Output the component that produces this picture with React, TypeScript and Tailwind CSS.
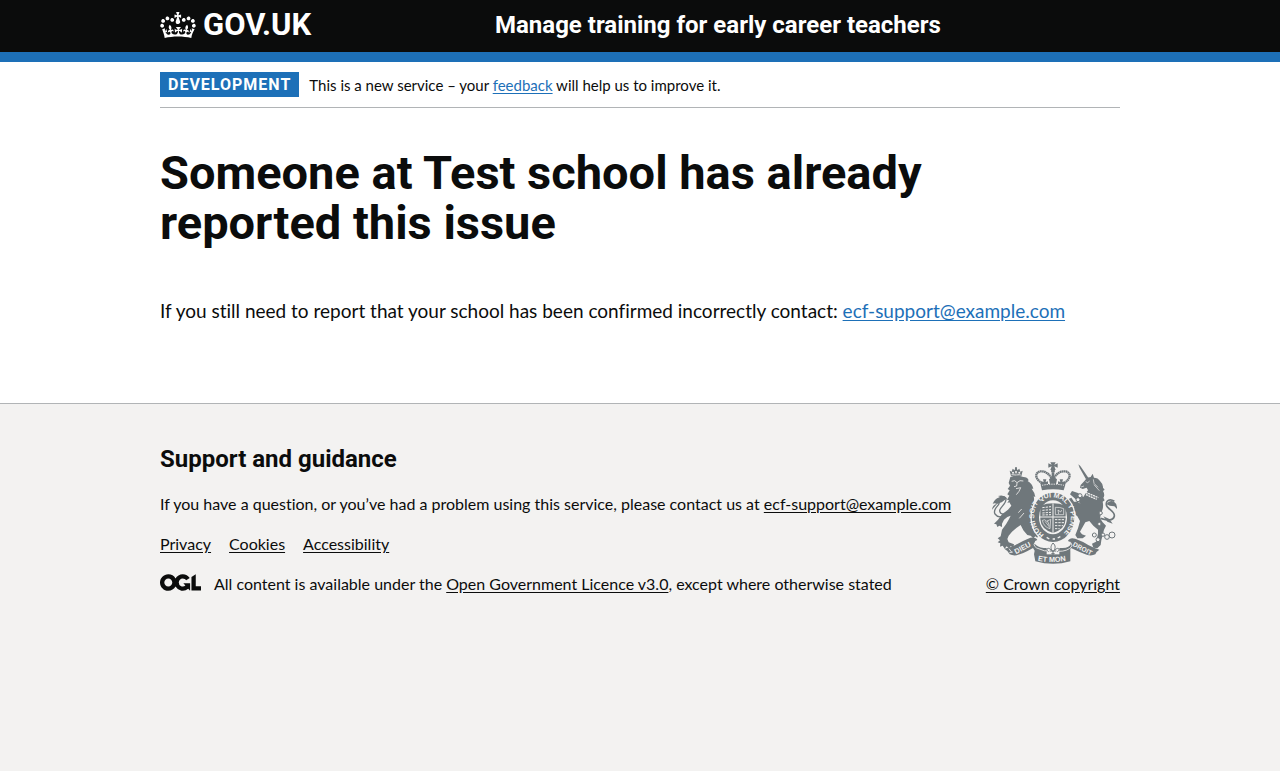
import type { ReactNode } from "react";

function Container({ children }: { children: ReactNode }) {
  return <div className="mx-auto w-full max-w-[992px] px-4">{children}</div>;
}

function CrownIcon() {
  return (
    <svg viewBox="0 4 36 27" className="h-[27px] w-9 shrink-0 fill-current" aria-hidden="true">
      <path d="M6.7 12.2c1 .4 2.1-.1 2.5-1s-.1-2.1-1-2.5c-1-.4-2.1.1-2.5 1-.4 1 0 2.1 1 2.5m-4.300 2.500c1 .4 2.100-.1 2.500-1s-.1-2.100-1-2.500c-1-.4-2.100.1-2.500 1-.5 1 0 2.100 1 2.500m-1 4.800c1 .4 2.100-.1 2.500-1 .4-1-.1-2.100-1-2.500-1-.4-2.100.1-2.500 1-.4 1 0 2.100 1 2.500m10.100-5.800c1 .4 2.100-.1 2.500-1s-.1-2.100-1-2.500c-1-.4-2.100.1-2.500 1s0 2.100 1 2.500m17.800-1.500c-1 .4-2.100-.1-2.500-1s.1-2.100 1-2.500c1-.4 2.100.1 2.500 1 .4 1 0 2.100-1 2.500m4.300 2.500c-1 .4-2.100-.1-2.500-1s.1-2.100 1-2.500c1-.4 2.100.1 2.500 1 .5 1 0 2.100-1 2.500m1 4.800c-1 .4-2.100-.1-2.500-1-.4-1 .1-2.100 1-2.500 1-.4 2.100.1 2.500 1 .4 1 0 2.100-1 2.500m-10.100-5.800c-1 .4-2.100-.1-2.500-1s.1-2.100 1-2.500c1-.4 2.100.1 2.500 1s0 2.100-1 2.500" />
      <path d="m18.700 8.800 2.400 1.300V6.500l-2.400.8-.2-.3 1-3h-3.400l1 3-.2.300-2.400-.8v3.600l2.400-1.300.3.300-1.400 4.200c-.1.200-.1.400-.1.600 0 1.100.8 2 1.900 2.200h.7c1-.2 1.900-1.100 1.900-2.100 0-.2 0-.4-.1-.6l-1.400-4.200z" />
      <path d="M18 28.500c4.800 0 9.200.5 13.300 1.500.5-3.800 1.700-6.300 3.300-8.800l-2.900-.9c.2 1.300.3 1.900 0 2.700-.4-.4-.8-1.100-1.100-2.300l-1.200 4c.7-.5 1.300-.8 2-.9-1.100 2.500-2.600 3.100-3.500 3-1.100-.2-1.700-1.200-1.500-2.100.3-1.200 1.500-1.500 2.100-.1 1.100-2.300-.8-3-2-2.300 1.900-1.900 2.100-3.500.6-5.600-2.100 1.600-2.100 3.200-1.200 5.500-1.200-1.400-3.200-.6-2.500 1.600.9-1.400 2.100-.5 1.900.8-.2 1.100-1.700 2.100-3.500 1.900-2.700-.2-2.900-2.100-2.900-3.600.7-.1 1.900.5 2.900 1.900l.4-4.300c-1.100 1.100-2.100 1.400-3.200 1.400.4-1.200 2.100-3 2.100-3h-5.400s1.700 1.900 2.100 3c-1.100 0-2.100-.2-3.200-1.400l.4 4.300c1-1.400 2.200-2 2.900-1.900-.1 1.500-.2 3.400-2.900 3.600-1.900.2-3.400-.8-3.500-1.900-.2-1.300 1-2.200 1.900-.8.700-2.300-1.200-3-2.500-1.600.9-2.200.9-3.900-1.200-5.500-1.500 2-1.300 3.700.6 5.600-1.200-.7-3.100 0-2 2.300.6-1.400 1.800-1.100 2.100.1.200.9-.3 1.900-1.500 2.100-.9.200-2.400-.5-3.500-3 .6 0 1.200.3 2 .9l-1.200-4c-.3 1.100-.7 1.900-1.100 2.300-.3-.8-.2-1.400 0-2.700l-2.900.9C3 23.700 4.200 26.200 4.700 30c4.100-1 8.500-1.500 13.300-1.500" />
    </svg>
  );
}

function OglIcon() {
  return (
    <svg viewBox="0 0 483.2 195.7" className="h-[17px] w-[41px] shrink-0 fill-current" role="img" aria-label="Open Government Licence">
      <path d="M421.5 142.8V.1l-50.7 32.3v161.1h112.4v-50.7zm-122.3-9.6A47.12 47.12 0 0 1 221 97.8c0-26 21.1-47.1 47.1-47.1 16.7 0 31.4 8.7 39.7 21.8l42.7-27.2A97.63 97.63 0 0 0 268.1 0c-36.5 0-68.3 20.1-85.1 49.7A98 98 0 0 0 97.8 0C43.9 0 0 43.9 0 97.8s43.9 97.8 97.8 97.8c36.5 0 68.3-20.1 85.1-49.7a97.76 97.76 0 0 0 149.6 25.4l19.4 22.2h3v-87.8h-80l24.3 27.5zM97.8 145c-26 0-47.1-21.1-47.1-47.1s21.1-47.1 47.1-47.1 47.1 21.1 47.1 47.1S123.8 145 97.8 145" />
    </svg>
  );
}

const ink = "#6f777b";
const paper = "#f3f2f1";

function Lion() {
  return (
    <g>
      <path fill={ink} d="M81 63 77 47l6 3 3-9 6 5 2-10h4l2 10 6-5 3 9 7-3-4 17q-15-4-31-1z" />
      <g fill={paper}>
        <circle cx="87" cy="53" r="3" />
        <circle cx="96" cy="51" r="3" />
        <circle cx="106" cy="53" r="3" />
      </g>
      <path d="M82 59q15-4 29 1" stroke={paper} strokeWidth="2" fill="none" />
      <path fill={ink} d="M79 66Q98 58 118 66Q130 66 134 76L131 78Q145 86 148 101L143 101Q152 112 154 126L149 124Q152 134 148 146L143 168Q150 180 148 192Q156 188 162 196L158 204L148 204L144 216L150 228L164 236L160 248L154 244L148 250L140 242L130 240L118 226L110 210L98 218L84 230L74 242L70 252L74 262L90 268L88 278L80 273L76 281L68 274L62 281L56 272L48 275L49 265L41 262L48 256L41 250L50 244L54 224L66 208L74 194L80 182L70 186L60 194L54 206L54 216L46 212L40 216L37 208L30 206L42 194L54 178L72 164L82 152L76 142L70 144L75 136L69 134L76 122L70 118L77 106L71 102L78 92L74 84Z" />
      <path d="m83 79 9-2 7 6 9-6 10 1M99 84l-1 9-8 2m6 6 14-3-5 11-8 10m6 54 10-11m-7 28 14-16" stroke={paper} strokeWidth="2.500" fill="none" />
      <path d="M73 179C57 184 44 192 33 177 27 166 36 158 42 151 47 145 47 138 39 139M78 171C62 180 49 180 47 168 46 157 67 148 66 132 64 122 50 124 40 134" stroke={ink} strokeWidth="4" fill="none" />
      <path fill={ink} d="M24 164q1-14 14-18-6-3-12 0 8-18 24-19l-8-4q18-5 27 7l-16 12-14 5z" />
    </g>
  );
}

function Unicorn() {
  return (
    <g>
      <path d="m283 28 6 5 24 35-7 5-19-34z" fill={ink} />
      <path fill={ink} d="M302 77L309 68L320 66L326 56L330 68Q342 68 348 78Q358 88 357 98L362 104L357 108Q364 120 358 128L362 136L356 140Q360 158 352 172L348 190L356 202L366 212L360 224L356 240L352 256L350 270L340 280L328 278L324 266L336 260L342 236L342 224L328 212L316 198L304 202L296 216L288 230L294 238L306 242L296 250L280 250L274 240L282 220L288 198L280 184L266 172L256 156L250 142L254 132L262 128L270 140L280 140L290 146L270 128L258 118L264 108L282 114L298 126L304 116L312 106L308 98L296 102L288 98L290 90Z" />
      <path d="m305 80 6 3 6-5m-26 18 9-3m28-20 2 12 12 12m-12-8 16 18" stroke={paper} strokeWidth="2" fill="none" />
      <path d="m305 112 38 16m-37-9 32 14" stroke={paper} strokeWidth="4" strokeDasharray="6 2" fill="none" />
      <g fill={paper} stroke={ink} strokeWidth="3">
        <circle cx="288" cy="122" r="6" />
        <circle cx="282" cy="134" r="6" />
        <circle cx="350" cy="174" r="5" />
        <circle cx="346" cy="207" r="5" />
        <circle cx="331" cy="240" r="6" />
        <circle cx="342" cy="254" r="6" />
        <circle cx="357" cy="239" r="5" />
        <circle cx="369" cy="246" r="7" />
        <circle cx="384" cy="240" r="9" />
      </g>
      <path d="M349 190c18 5 39 10 42-7 2-15-23-21-24-34-1-14 11-18 24-10" stroke={ink} strokeWidth="5" fill="none" />
      <path fill={ink} d="M368 148q8-14 22-8 10 6 9 22l-8-8-14-2zM358 184l18 8 10 14-16-6z" />
    </g>
  );
}

function ShieldAndCrown() {
  return (
    <g>
      <path fill={ink} d="M199 22h16l-4 7 10-4v13l-10-4 4 11h-16l4-11-10 4V25l10 4z" />
      <circle cx="207" cy="48" r="6" fill={ink} />
      <path d="M174 85C148 67 155 50 171 49c14-1 28 10 35 28 7-18 21-29 36-28 17 1 23 19-2 36" stroke={ink} strokeWidth="7" strokeDasharray="5 1" fill="none" />
      <path fill={ink} d="m170 89 2-10 7 2-2-8h10l-2 8 7-2v8l6 0-3-14 8-6v-13h8v13l8 6-3 14h6v-8l7 2-2-8h10l-2 8 7-2 2 10-5 17q-31-7-65 0z" />
      <path d="M174 91q33-7 66 0" stroke={paper} strokeWidth="3" strokeDasharray="4 3" fill="none" />
      <ellipse cx="207" cy="187" rx="68" ry="77" fill={paper} />
      <ellipse cx="207" cy="187" rx="64" ry="74" fill={ink} />
      <ellipse cx="207" cy="187" rx="42" ry="51" fill={paper} />
      <path id="garter" d="M182 240C137 212 142 140 186 130C207 123 234 129 249 151C271 180 262 222 226 244" fill="none" />
      <text fill={paper} fontSize="21" fontWeight="700" fontFamily="Liberation Sans, sans-serif">
        <textPath href="#garter" startOffset="2">HONI SOIT QUI MAL Y PENSE</textPath>
      </text>
      <path fill={ink} d="M169 152q38-14 76 0v40q-1 30-38 42-37-12-38-42z" />
      <path d="M207 145v91M168 186h78" stroke={paper} strokeWidth="3" />
      <path d="m175 158 26-3m-26 11 26-2m-26 10 26-2m-26 8 26-1m12 15h29m-29 9h28m-28 9h24m-24 9h14" stroke={paper} strokeWidth="3" strokeDasharray="7 3" />
      <path d="M214 157q14-1 25 4v18h-25zM224 177l-2-12 8 6 3-6M175 196q8-5 13 3l12-6-2 28q-19-5-23-25m8 3 14 18m-7-20 6 15" stroke={paper} strokeWidth="2" fill="none" />
      <path d="m188 247 8 5m10 0h7m8-3 8-4" stroke={paper} strokeWidth="4" />
    </g>
  );
}

function Motto() {
  return (
    <g>
      <path fill={ink} d="M61 281q18-3 35-12 23-13 43-21 17-3 21 7-10 3-8 11 8 10 27 13h57q21-1 25-13-2-6-9-8 5-12 22-7 23 8 40 20 17 9 32 13-10 6-12 14-12 6-26 1-23-8-47-20-3 2-2 8v32q-51 15-105 0l-4-21 2-11-5-8q-31 18-50 22-12 1-20-3-6-12-16-17z" />
      <path d="M157 259q-14 10 1 20 22 12 49 9 33 4 49-7 14-9 2-21M75 281l9 12m-8 0 10-2" stroke={paper} strokeWidth="2.500" fill="none" />
      <path id="motto-left" d="M96 298 160 263" fill="none" />
      <path id="motto-mid" d="M161 317q46 9 94-2" fill="none" />
      <path id="motto-right" d="m265 272 76 40" fill="none" />
      <g fill={paper} fontSize="22" fontWeight="700" fontFamily="Liberation Sans, sans-serif">
        <text><textPath href="#motto-left">DIEU</textPath></text>
        <text><textPath href="#motto-mid">ET MON</textPath></text>
        <text fontSize="20"><textPath href="#motto-right">DROIT</textPath></text>
      </g>
      <path fill={paper} d="M188 264h38v34h-38z" />
      <path d="M207 264c-9 11-6 16-3 24h6c4-10 6-15-3-24zm-5 21c-15-13-16 3-8 5m18-5c15-13 16 3 8 5m-23-2h20m-10 0v12m-5-4h10" stroke={ink} strokeWidth="3" fill="none" />
    </g>
  );
}

function RoyalArms() {
  return (
    <svg viewBox="24 21 375 306" className="h-[102px] w-[125px]" aria-hidden="true">
      <Lion />
      <Unicorn />
      <Motto />
      <ShieldAndCrown />
    </svg>
  );
}

export default function App() {
  return (
    <div className="flex min-h-screen flex-col bg-white font-[Lato,sans-serif] text-[#0b0c0c] [font-variant-ligatures:none]">
      <header className="border-b-10 border-[#1d70b8] bg-[#0b0c0c] font-[Roboto,sans-serif] text-white">
        <Container>
          <div className="flex h-[52px] items-center pb-0.5">
            <a href="/" className="flex w-[335px] items-center gap-[7px] text-[31px] leading-[30px] font-bold">
              <CrownIcon />
              <span>GOV.UK</span>
            </a>
            <a href="/" className="text-2xl leading-[30px] font-bold">
              Manage training for early career teachers
            </a>
          </div>
        </Container>
      </header>

      <Container>
        <div className="flex items-center gap-2.5 border-b border-[#b1b4b6] py-2.5">
          <strong className="bg-[#1d70b8] px-2 py-1 font-[Roboto,sans-serif] text-base leading-[17px] font-bold tracking-[1px] text-white uppercase">
            Development
          </strong>
          <span className="text-[15px] leading-5">
            This is a new service – your{" "}
            <a href="#feedback" className="text-[#1d70b8] underline underline-offset-2">feedback</a> will help us to improve it.
          </span>
        </div>
        <main className="pt-10 pb-20">
          <h1 className="mb-[50px] max-w-[800px] font-[Roboto,sans-serif] text-[47px] leading-[50px] font-bold">
            Someone at Test school has already reported this issue
          </h1>
          <p className="text-[19px] leading-[25px]">
            If you still need to report that your school has been confirmed incorrectly contact:{" "}
            <a href="mailto:ecf-support@example.com" className="text-[#1d70b8] underline underline-offset-2">ecf-support@example.com</a>
          </p>
        </main>
      </Container>

      <footer className="flex-1 border-t border-[#b1b4b6] bg-[#f3f2f1] pt-10 pb-6 text-base leading-5">
        <Container>
          <div className="flex flex-wrap items-end justify-between gap-5">
            <div>
              <h2 className="mb-5 font-[Roboto,sans-serif] text-2xl leading-[30px] font-bold">Support and guidance</h2>
              <p className="mb-5">
                If you have a question, or you’ve had a problem using this service, please contact us at{" "}
                <a href="mailto:ecf-support@example.com" className="underline underline-offset-2">ecf-support@example.com</a>
              </p>
              <ul className="mb-5 flex gap-[18px]">
                <li><a href="#privacy" className="underline underline-offset-2">Privacy</a></li>
                <li><a href="#cookies" className="underline underline-offset-2">Cookies</a></li>
                <li><a href="#accessibility" className="underline underline-offset-2">Accessibility</a></li>
              </ul>
              <div className="flex items-start gap-[13px]">
                <OglIcon />
                <span>
                  All content is available under the{" "}
                  <a href="#licence" className="underline underline-offset-2">Open Government Licence v3.0</a>, except where otherwise stated
                </span>
              </div>
            </div>
            <a href="#copyright" className="flex flex-col items-end gap-2.5 underline underline-offset-2">
              <span className="pr-[3px]">
                <RoyalArms />
              </span>
              <span>© Crown copyright</span>
            </a>
          </div>
        </Container>
      </footer>
    </div>
  );
}
